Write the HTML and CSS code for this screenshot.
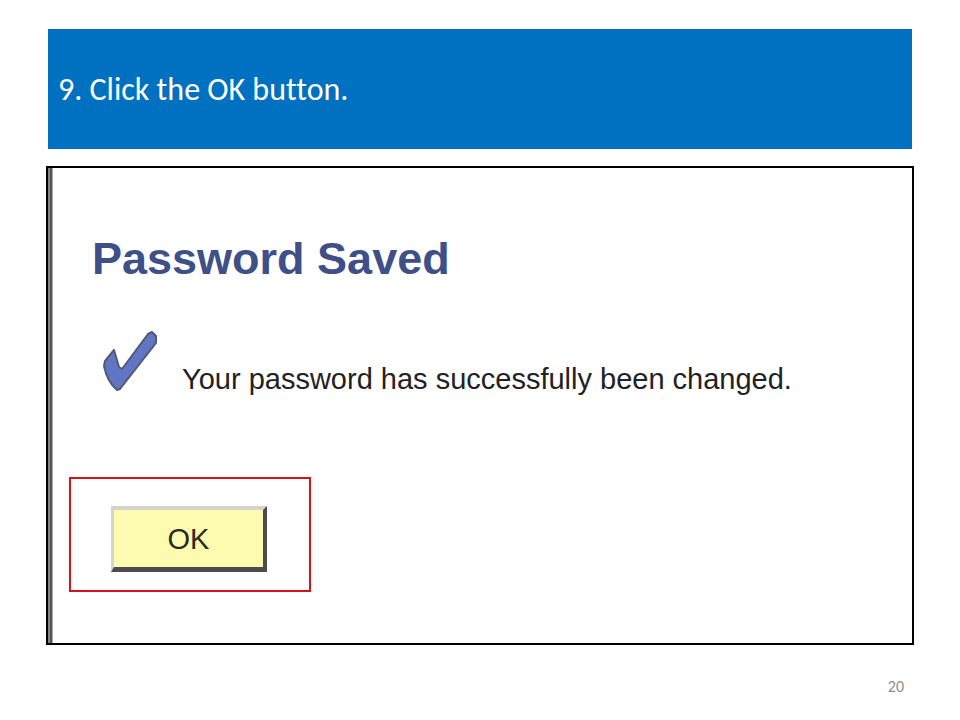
FILE: index.html
```html
<!DOCTYPE html>
<html lang="en">
<head>
<meta charset="utf-8">
<meta name="viewport" content="width=device-width, initial-scale=1">
<title>Click the OK button</title>
<link rel="stylesheet" href="styles.css">
</head>
<body>
<main class="slide">
  <header class="banner">
    <h1 class="banner-title">9. Click the OK button.</h1>
  </header>
  <section class="panel">
    <h2 class="heading">Password Saved</h2>
    <div class="status">
      <svg class="check" viewBox="0 0 56 64" aria-hidden="true">
        <path d="M12 21 L3 32 L2 37 C4 47 9 56 15 61 L18 60 L54 14 V7 L50 3 L46 5 L20 40 L17 38 Z"/>
      </svg>
      <p class="message">Your password has successfully been changed.</p>
    </div>
    <div class="highlight">
      <button class="ok" type="button">OK</button>
    </div>
  </section>
  <footer class="page-number">20</footer>
</main>
</body>
</html>
```
FILE: styles.css
```css
* {
  box-sizing: border-box;
}

body {
  margin: 0;
  background: #fff;
}

h1, h2, p {
  margin: 0;
}

.slide {
  padding: 29px 46px 20px;
}

.banner {
  display: flex;
  align-items: center;
  min-height: 120px;
  margin: 0 2px 17px;
  padding: 2px 10px 0;
  background: #0070c0;
  color: #fff;
}

.banner-title {
  font: 400 32px/40px Carlito, Lato, sans-serif;
  font-variant-ligatures: none;
}

.panel {
  padding: 57px 20px 51px 16px;
  border: 2px solid #000;
  background: linear-gradient(90deg, #858585 2px, #555 2px, #555 4px, #aaa 4px, #aaa 5px, #fff 5px);
  font-family: "Liberation Sans Narrow", "Arial Narrow", "Liberation Sans", sans-serif;
}

.heading {
  padding-left: 28px;
  color: #3f5088;
  font-size: 45px;
  line-height: 68px;
}

.status {
  display: flex;
  align-items: flex-start;
  gap: 24px;
  margin: 36px 0 76px;
  padding-left: 38px;
}

.check {
  flex: none;
  width: 56px;
  height: 64px;
  fill: #6076c4;
  stroke: #555a70;
  stroke-width: 2;
  stroke-linejoin: round;
}

.message {
  padding-top: 28px;
  color: #222;
  font-size: 29px;
  line-height: 44px;
}

.highlight {
  width: 242px;
  margin-left: 5px;
  padding: 27px 40px 18px;
  border: 2px solid #d8101a;
}

.ok {
  display: block;
  width: 156px;
  height: 66px;
  padding: 0;
  border-style: solid;
  border-width: 4px 4px 5px 3px;
  border-color: #d4d4cc #4b4b50 #4b4b50 #d4d4cc;
  background: #fdfbb0;
  color: #2b2a1c;
  font-family: inherit;
  font-size: 29px;
  line-height: 44px;
}

.page-number {
  padding: 33px 10px 0;
  color: #8c8c8c;
  font: 16px/18px Carlito, Lato, sans-serif;
  text-align: right;
}
```
